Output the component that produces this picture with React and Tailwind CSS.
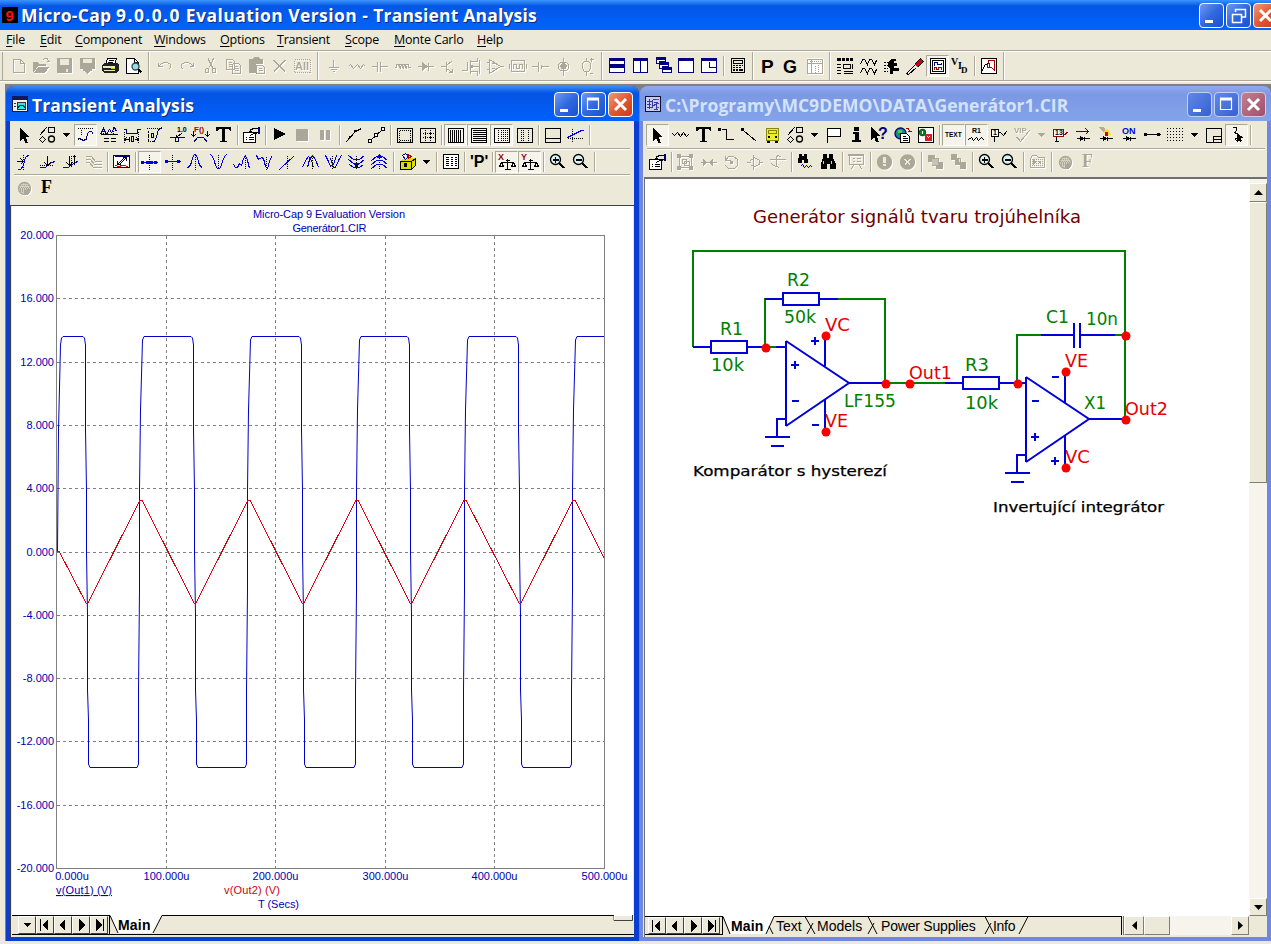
import React from 'react';

const NAVY = '#000080';
const BLUE = '#0000e0';
const RED = '#a00000';

const waveUp = 'M3 15L5 14L7 10L8 5L10 2H11L13 5L14 10L16 14L18 15';
const waveDown = 'M3 2L5 4L7 9L8 13L10 16H12L14 13L15 9L17 4L19 2';

// Glyphs live on a 23x20 grid: s = stroked path, f = filled path, t = text
const GLYPHS = {
  new: [['s', 'M6 3H13L17 7V16H6ZM13 3V7H17']],
  open: [['f', 'M3 6h5l1 2h7v2H8l-4 6H3z'], ['f', 'M8 11h11l-4 6H4z'], ['s', 'M12 4L14 2H17L18 5M16 5H19']],
  save: [['f', 'M4 2h15v15H4z'], ['f', 'M7 3h9v6H7z', '#ece9d8'], ['f', 'M13 13h2v3h-2z', '#ece9d8']],
  save2: [['f', 'M4 2h15v11H4z'], ['f', 'M7 3h9v4H7z', '#ece9d8'], ['f', 'M7 13h9v2H7zM8 15h7l-3.500 3z']],
  print: [
    ['f', 'M8 3h9l-2 5H6z', '#fff'], ['s', 'M8 2H17L15 8H6ZM9 4H14M8 6H13'],
    ['f', 'M3 9l3-2h12l2 2v5l-3 3H5l-2-2z', '#222'],
    ['f', 'M4 10h12v2H4zM5 14h11v1H5z', '#e8e8b8'], ['f', 'M12 12h4v1h-4z', '#cc0'],
  ],
  preview: [
    ['f', 'M4 2h9l4 4v12H4z', '#fff'], ['s', 'M4 2H12L16 6V17H4ZM12 2V6H16'],
    ['c', 13, 10, 3.5, '#9dd', '#345'], ['s', 'M16 13L19 17M17 13L20 16'],
  ],
  undo: [['s', 'M5 6V10H9M5 10L8 7L11 6H14L17 8V11L15 13']],
  redo: [['s', 'M17 6V10H13M17 10L14 7L11 6H8L5 8V11L7 13']],
  cut: [['s', 'M9 2L13 11M14 2L10 11M9 3L13 12M7 12h2v4H6v-3zM14 12h2v4h-3v-4z']],
  copy: [['s', 'M4 3H10L12 5V13H4ZM6 6H9M6 8H9M6 10H9M10 7H16L18 9V17H10V7M12 10H15M12 12H16M12 14H16']],
  paste: [['f', 'M4 3h4l1-2h5l1 2h3v5h-7v9H4z'], ['s', 'M11 9H17L19 11V17H11ZM13 12H16M13 14H17']],
  del: [['s', 'M5 4L17 16M6 4L17 15M17 4L5 16M16 4L5 15']],
  all: [['t', 'All', 4, 14, 11, null, 'b'], ['d', 'M3 3H19V16H3Z']],
  ground: [['s', 'M11 3V11M6 11H16M8 13H14M10 15H12']],
  res: [['s', 'M3 10L5 8L8 12L12 8L15 12L18 8L20 10']],
  cap: [['s', 'M3 10H9V5M9 10V15M12 5V15M12 10H19']],
  ind: [['s', 'M3 11H5V8H7L9 12L8 8H10L12 12L11 8H13L15 12L14 8H17V11H19']],
  diode: [['s', 'M3 10H19M14 6V14'], ['f', 'M8 6l6 4.500l-6 4.500z']],
  npn: [['s', 'M3 10H9M9 5V15M9 9L15 4M9 12L15 16M15 12V16H11']],
  mos: [['s', 'M1 14H7V5M10 3V17M10 5H17V1M10 10H18M10 15H17V19M13 8L10 10L13 12M19 3V17']],
  opamp: [['s', 'M6 3V17L17 10ZM3 6H6M3 13H6M17 10H20M8 7H11M8 12H11']],
  pulse: [['s', 'M5 4H18V15H5ZM3 7V12M20 7V12M7 12V8H10V12H13V8H16V12']],
  batt: [['s', 'M2 10H8M9 5V15M12 8V12M12 10H19']],
  isrc: [['s', 'M11 1V19M8 6H14L16 8V12L14 14H8L6 12V8Z'], ['f', 'M8 10l3-4l4 4v1H8zM9 11h5v2H9z']],
  vsrc: [['s', 'M11 1V5M11 15V19M9 5H13L15 7V12L13 15H9L7 12V7ZM14 3H18M16 1V5M14 17H17']],
  tileH: [['f', 'M3 2h16v15H3z', NAVY], ['f', 'M4 5h14v3H4zM4 12h14v4H4z', '#fff']],
  tileV: [['f', 'M4 2h15v15H4z', NAVY], ['f', 'M5 5h6v11H5zM12 5h6v11h-6z', '#fff']],
  cascade: [['f', 'M4 1h10v7H4zM7 6h10v7H7zM10 11h10v6H10z', NAVY], ['f', 'M5 4h8v1H5zM5 5h2v2H5zM8 9h8v1H8zM8 10h2v2H8zM11 14h8v2h-8z', '#fff']],
  maxi: [['f', 'M3 2h16v15H3z', NAVY], ['f', 'M4 5h14v11H4z', '#fff']],
  half: [['f', 'M3 2h16v15H3z', NAVY], ['f', 'M4 5h14v11H4z', '#fff'], ['s', 'M11 5V11H18', NAVY]],
  calc: [['s', 'M5 2H18V16H5ZM7 4H16V7H7Z'], ['f', 'M7 9h2v1H7zM10 9h2v1h-2zM13 9h2v1h-2zM16 9h1v1h-1zM7 11h2v1H7zM10 11h2v1h-2zM13 11h2v1h-2zM7 13h2v2H7zM10 13h2v2h-2zM13 13h4v2h-4z']],
  P: [['t', 'P', 4, 17, 19, '#000', 'b']],
  G: [['t', 'G', 3, 17, 18, '#000', 'b']],
  tabl: [['f', 'M4 2h16v16H4z', '#fff'], ['s', 'M4 3H19V17H4ZM4 7H19M8 3V17'], ['d', 'M6 5H18M12 9V16M15 8V16']],
  list: [['f', 'M3 2h4v3H3zM8 2h3v3H8zM12 2h3v3h-3zM16 2h3v3h-3zM3 8h4v1H3zM3 11h4v1H3zM3 14h4v1H3zM3 17h4v1H3z'], ['s', 'M9 8H16V12H9ZM18 7V12M9 15H18M9 17H18']],
  waves: [['s', 'M3 8L5 3H7L10 8L12 3H14L17 8L19 4M3 17L5 12H7L10 17L12 12H14L17 17L19 13']],
  wrench: [['f', 'M12 3h4v2h-2v2h3v3h-3v2h5v3h-6v3h-3v-5l-2-2V6z'], ['f', 'M4 6h2v1H4zM7 6h1v1H7zM4 9h2v1H4zM7 9h1v1H7zM4 12h2v1H4zM7 12h1v1H7zM4 15h2v1H4zM7 15h1v1H7z']],
  probe: [['f', 'M11 8l6-6l3 3l-6 6z', '#d00010'], ['s', 'M11 8L17 2L20 5L14 11M11 9L3 17M13 11L5 18M3 17L5 18']],
  scope: [['f', 'M4 3h15v15H4z', '#fff'], ['s', 'M4 2H19V17H4ZM6 4H17V15H6Z'], ['s', 'M8 9V6H11V8H15V6', NAVY], ['s', 'M8 13V11H10V13H12V11H15V13', RED]],
  vid: [['t', 'V', 2, 9, 10, '#000', 's'], ['t', 'I', 9, 13, 10, '#000', 's'], ['t', 'D', 12, 17, 9, '#000', 's']],
  plotbox: [['f', 'M4 2h15v15H4z', '#fff'], ['s', 'M4 2H19V17H4ZM4 15L8 8L11 7'], ['s', 'M11 4H17V14L14 11H10ZM12 6V11', RED]],

  arrow: [['f', 'M7 2v14l3-3l2.500 5h2.500l-2.500-6h4z']],
  shapes: [['s', 'M3 10L10 2M12 2H18V7H12ZM6 11L9 14L6 17L3 14Z'], ['c', 15, 13.5, 3, 'none', '#000']],
  drop: [['f', 'M3 8h8l-4 4z']],
  cursorWave: [['d', 'M3 3H19M3 14H12M7 4V9'], ['s', 'M3 13H6L8 15H10L12 13L13 8L15 6H17L19 9', NAVY]],
  peaks: [['s', 'M3 9L6 3L9 9L12 4L14 7L17 2L19 6', NAVY], ['s', 'M3 9H20M6 13H11M13 13H18M6 16H11M13 16H18'], ['d', 'M6 1V9M16 1V9']],
  width: [['s', 'M3 4H6V8H17V4H20', NAVY], ['s', 'M4 14H8M14 14H18M6 12L4 14L6 16M16 12L18 14L16 16M9 11V16M11 11H13V16H11Z'], ['d', 'M4 6V17M18 6V17']],
  height: [['s', 'M9 16H11L13 11L15 4L19 2', NAVY], ['d', 'M3 3H17M4 16H11'], ['s', 'M5 5V7M5 13V15M5 8V12M8 8H10V12H8Z']],
  tag: [['s', 'M3 12H9V16H12V12H18', NAVY], ['s', 'M16 7L10 12M10 9V12H13'], ['t', '1.0', 11, 7, 7, '#000', 'b']],
  func: [['t', 'F()', 5, 7, 8, RED, 'b'], ['s', 'M4 5V11M18 5V11M2 9L4 11L6 9M16 9L18 11L20 9'], ['s', 'M4 17L8 12H14L18 17', NAVY]],
  T: [['f', 'M4 2h15v4h-1l-2-2h-3v12h2v1H8v-1h2V4H7L5 6H4z']],
  props: [['f', 'M3 7h13v11H3z', '#fff'], ['s', 'M3 7H15V17H3ZM5 12H6M8 12H13M5 14H6M8 14H13M10 10L13 8L11 6M9 8L10 4L14 3H18V7L14 8'], ['f', 'M18 2h2v7h-2z', NAVY]],
  play: [['f', 'M6 3l12 6l-12 6z']],
  stop: [['f', 'M5 4h12v12H5z']],
  pause: [['f', 'M6 5h4v10H6zM12 5h4v10h-4z']],
  line1: [['s', 'M3 17L13 6L19 3'], ['f', 'M7 11h2v2H7zM12 5h2v2h-2z']],
  line2: [['s', 'M4 16L18 3'], ['f', 'M3 14h4v4H3zM9 8h4v4H9zM16 2h4v4h-4z'], ['f', 'M4 15h2v2H4zM10 9h2v2h-2zM17 3h2v2h-2z', '#fff']],
  box1: [['s', 'M4 3H19V17H4Z'], ['d', 'M6 5H18M6 15H18M6 5V16M17 5V16']],
  box2: [['s', 'M4 3H19V17H4Z'], ['d', 'M6 8H18M6 12H18M9 4V16M14 4V16M8 8H10M8 12H10M13 8H15M13 12H15']],
  vlines: [['s', 'M4 3H19V17H4ZM6 4V16M8 4V16M10 4V16M12 4V16M14 4V16M16 4V16']],
  hlines: [['s', 'M4 3H19V17H4ZM5 5H18M5 7H18M5 9H18M5 11H18M5 13H18M5 15H18']],
  dots1: [['s', 'M4 3H19V17H4Z'], ['d', 'M8 4V16M11 4V16M13 4V16M15 4V16M17 4V16']],
  dots2: [['s', 'M4 3H19V17H4Z'], ['d', 'M8 4V16M10 4V16M15 4V16']],
  base: [['s', 'M4 3H19V17H4ZM4 13H19']],
  cross: [['d', 'M3 13H19M8 3V17'], ['s', 'M3 12L17 5H19', BLUE]],
  c1: [['s', 'M4 17H7L10 13L12 5L16 2', BLUE], ['s', 'M3 9H10M7 6L10 9L7 12'], ['d', 'M10 2V17']],
  c2: [['s', 'M3 15H9L15 10L19 9', BLUE], ['s', 'M11 3V13M8 10L11 13L14 10'], ['d', 'M3 13H16']],
  c3: [['s', 'M3 15H9L15 10L19 9', BLUE], ['s', 'M10 3V13M7 10L10 13L13 10M15 12V3M13 5L15 3L17 5'], ['d', 'M12 3V15']],
  c4: [['s', 'M3 4H9L13 9H19M3 7H8L12 12H19M3 10H7L11 15H19']],
  redplot: [['f', 'M3 3h16v13H3z', '#fff'], ['s', 'M3 3H19V15H3ZM4 4H18', NAVY], ['s', 'M5 13L8 14L12 13L18 14', '#d00'], ['s', 'M7 12L14 5M9 12L16 5M12 5H16V8M7 8V12H10']],
  h1: [['s', 'M3 10H19', BLUE], ['f', 'M3 9h3v3H3zM8 9h3v3H8zM12 9h3v3h-3zM16 9h3v3h-3z', BLUE], ['d', 'M11 2V18']],
  h2: [['s', 'M3 9H19', BLUE], ['f', 'M4 8h3v3H4zM16 8h3v3h-3z', BLUE], ['d', 'M11 2V18']],
  p1: [['s', waveUp, BLUE], ['d', 'M11 2V17']],
  p2: [['s', waveDown, BLUE], ['d', 'M11 2V16']],
  p3: [['s', 'M3 12L5 15H7L9 11L11 13L13 6L15 3L17 8L19 16', BLUE], ['d', 'M15 3V16']],
  p4: [['s', 'M3 3L5 7L8 5L10 6L12 14L14 16L16 9L18 4', BLUE], ['d', 'M13 4V17']],
  p5: [['s', 'M3 17L18 3', BLUE], ['d', 'M11 3V17']],
  p6: [['s', 'M3 15L6 8L9 4L12 8L14 15M8 15L10 7L13 3L16 7L19 15', BLUE], ['d', 'M13 3V17']],
  p7: [['s', 'M3 3L6 9L8 14L11 12L14 3M8 6L11 15H13L16 8L19 3', BLUE], ['d', 'M10 3V17']],
  p8: [['s', 'M3 3L8 7H14L19 3M3 7L8 11H14L19 7M4 12L8 15H14L18 12', BLUE], ['f', 'M9 12h5l-2 4h-1z', BLUE], ['d', 'M11 3V17']],
  p9: [['s', 'M3 8L8 4H14L19 8M3 12L8 8H14L19 12M3 16L8 12H14L19 16', BLUE], ['f', 'M9 6h5l-2-4h-1z', BLUE], ['d', 'M11 3V17']],
  cube: [['f', 'M4 9l4-3h11v8l-4 3H4z', '#dddd00'], ['s', 'M4 9H15V17H4ZM15 9L19 6V13L15 17'], ['f', 'M6 3h4v4H6z', '#fff'], ['s', 'M6 3L9 1L12 4L9 7Z', NAVY], ['s', 'M11 2L15 4L12 6Z', RED], ['f', 'M8 11h3v4H8z']],
  sheet: [['f', 'M4 2h15v15H4z', '#fff'], ['s', 'M4 2H19V16H4ZM6 5H9M6 7H9M6 9H9M6 11H9M6 13H9M11 5H13M11 7H13M11 9H13M11 11H13M11 13H13M15 5H17M15 7H17M15 9H17M15 11H17M15 13H17']],
  qp: [['t', "'P'", 3, 15, 16, '#000', 'b']],
  sx: [['t', 'X', 3, 8, 9, RED, 'b'], ['s', 'M12 6V17M6 10H18M9 17H15M6 10L4 14H8L6 10M18 10L16 14H20L18 10M10 8H14']],
  sy: [['t', 'Y', 3, 8, 9, RED, 'b'], ['s', 'M12 6V17M6 10H18M9 17H15M6 10L4 14H8L6 10M18 10L16 14H20L18 10M10 8H14']],
  zin: [['c', 9, 7, 5, '#d8f4f4', '#000'], ['s', 'M6 7H12M9 4V10M6 8H12M13 11L18 16M12 11L17 16M14 11L19 16']],
  zout: [['c', 9, 7, 5, '#d8f4f4', '#000'], ['s', 'M6 7H12M6 8H12M13 11L18 16M12 11L17 16M14 11L19 16']],
  ball: [['c', 11, 10, 6, '#d4d0c0', '#aca899'], ['d', 'M6 7H16M5 9H17M6 11H17M6 13H16M8 5H14M8 15H14M6 10H17M6 12H16'], ['f', 'M13 11h4v3l-3 3h-3v-3z']],
  F: [['t', 'F', 5, 15, 18, null, 's']],

  zig: [['s', 'M3 8L5 10L8 7L11 11L14 7L17 11L19 9']],
  wire: [['f', 'M3 3h3v3H3z'], ['s', 'M6 4H11V14H18']],
  diag: [['f', 'M3 3h3v3H3z'], ['s', 'M5 5L18 16']],
  bus: [['f', 'M5 3h12v13H5z', '#eded30'], ['s', 'M5 3H17V15H5ZM7 5H15V8H7Z', '#88880a'], ['f', 'M6 16h3v2H6zM14 16h3v2h-3zM7 11h2v2H7zM14 11h2v2h-2z']],
  flag: [['f', 'M5 3h14v8H5z', '#fff'], ['s', 'M5 3H18V11H5ZM5 3V17']],
  info: [['f', 'M9 2h5v4H9zM8 7h6v8h2v2H7v-2h3V9H8z']],
  help: [['f', 'M3 2v13l3-3l2 5h3l-2-6h3z'], ['t', '?', 10, 14, 16, NAVY, 'b']],
  globe: [['c', 9, 8, 5.5, '#168c88', NAVY], ['f', 'M7 5h4v3H7z', '#48d050'], ['f', 'M9 8h9v10H9z', '#fff'], ['s', 'M9 8H15L18 11V17H9ZM11 11H14M11 13H16M11 15H16'], ['s', 'M14 3L17 3L18 6M16 6H20', RED]],
  rg: [['f', 'M4 3h15v15H4z', '#fff'], ['s', 'M4 2H19V17H4Z'], ['c', 8, 7, 3, '#109020', '#086010'], ['f', 'M11 9h7v7h-7z', '#d02020'], ['s', 'M13 11L15 13M15 11L13 13', '#fff'], ['s', 'M8 5V8', '#fff']],
  TEXT: [['t', 'TEXT', 3, 12, 6.5, '#000', 'b']],
  R1: [['t', 'R1', 7, 8, 7, '#000', 'b'], ['s', 'M3 14L6 12L8 15L11 12L13 15L16 12L19 15']],
  n1: [['f', 'M3 4h8v8H3z', '#fff'], ['s', 'M3 4H10V11H3ZM6 11V16M10 7H12L15 10L18 6'], ['t', '1', 5, 10, 7, '#000', 'b']],
  vip: [['t', 'VIP', 3, 8, 8, null, 'b'], ['s', 'M5 12L9 16L18 5M6 12L9 15']],
  n13: [['f', 'M4 4h11v8H4z', '#fff'], ['s', 'M4 4H14V11H4ZM14 10L19 6', RED], ['s', 'M7 11V16M5 16H9'], ['t', '13', 6, 10, 7, '#000', 'b']],
  cur: [['s', 'M3 6H16M13 3L16 6L13 9', BLUE], ['s', 'M4 13H17M8 11V15L11 13ZM12 11V15']],
  pow: [['f', 'M4 2h5l3 5H8z', '#b5ad8c'], ['f', 'M9 6l3-2l3 3l1 3h-6z', '#ffe030'], ['f', 'M10 7h3v4h-3z', '#e00000'], ['s', 'M4 13H17M8 11V15L11 13ZM12 11V15']],
  ON: [['t', 'ON', 4, 9, 9, BLUE, 'b'], ['s', 'M4 13H17M8 11V15L11 13ZM12 11V15']],
  pin: [['s', 'M4 9H19'], ['f', 'M3 8h3v3H3zM16 8h3v3h-3z']],
  grid: [['p', 'M3 3H20M3 6H20M3 9H20M3 12H20M3 15H20']],
  title: [['s', 'M4 3H19V17H4ZM11 17V11H19M11 14H19']],
  rub: [['s', 'M7 2H11V5L9 7L13 9V12L10 13L11 16'], ['f', 'M12 8v9l2-2l1 2l2-1l-1-3h3z']],
  grp: [['s', 'M5 4H17V15H5ZM8 7H12V11H8ZM10 9H15V13H10Z'], ['f', 'M3 2h4v4H3zM15 2h4v4h-4zM3 14h4v4H3zM15 14h4v4h-4z']],
  flipx: [['s', 'M3 10H19'], ['f', 'M6 6l4 4.500l-4 4.500zM16 6l-4 4.500l4 4.500z']],
  rot: [['s', 'M5 3V8H10M5 8L8 4H13L17 7V13L14 16H8L5 13'], ['f', 'M10 9h3v3h-3z']],
  fx: [['s', 'M3 10H7M15 10H19M7 8L10 6M10 2V17M7 13H10M11 5L16 8V12L11 14']],
  fy: [['s', 'M3 7H19M5 11L7 13L10 14V4L12 3L15 5M10 14L13 15']],
  find: [['f', 'M5 2h3v2h2V2h3v3l1 3v3h-4V8H8v3H4V8l1-3z'], ['s', 'M6 14L8 12L10 15L12 13L14 15L16 13L18 15', BLUE]],
  bino: [['f', 'M6 2h4v4h2V2h4v4l3 6v5h-6v-5h-3v5H4v-5l2-6z'], ['f', 'M6 9h1v3H6zM14 9h1v3h-1z', '#ccc']],
  board: [['f', 'M3 2h16v2H3z'], ['s', 'M4 3V12H18V3M8 12L6 17M14 12L16 17M7 6H9M11 6H15M7 9H9M11 9H15']],
  excl: [['c', 11, 9.5, 7, '#aca899', '#aca899'], ['f', 'M10 5h3v6h-3zM10 12h3v2h-3z', '#ece9d8']],
  xx: [['c', 11, 9.5, 7, '#aca899', '#aca899'], ['s', 'M8 7L14 13M9 7L14 12M14 7L8 13M13 7L8 12', '#ece9d8']],
  front: [['f', 'M4 3h7v3h4v4h4v7h-7v-3H8v-4H4z'], ['f', 'M8 7h6v6H8z', '#c8c4b4']],
  back: [['f', 'M4 2h6v4h4v4h5v7h-6v-4H8V8H4z'], ['f', 'M12 7h1v3h-1z', '#ece9d8']],
  folder: [['s', 'M4 6L6 3H10L12 5H18V15H4Z'], ['d', 'M5 7H18M5 9H18M5 11H18M5 13H18'], ['f', 'M7 7l4 3l-4 3zM13 9h2v2h-2z']],
};

const FACE = {
  b: "font-bold font-['Liberation_Sans',sans-serif]",
  s: "font-bold font-['Liberation_Serif',serif]",
};

function Glyph({ name, w = 23 }) {
  return (
    <svg width={w} height={20} viewBox={`0 0 ${w} 20`} className="block shrink-0 overflow-visible" shapeRendering="crispEdges">
      {GLYPHS[name].map((g, i) => {
        const [k, a, b, c, d, e, f] = g;
        if (k === 's') return <path key={i} d={a} fill="none" stroke={b || 'currentColor'} transform="translate(.5 .5)" />;
        if (k === 'd') return <path key={i} d={a} fill="none" stroke="currentColor" strokeDasharray="1 1" transform="translate(.5 .5)" />;
        if (k === 'p') return <path key={i} d={a} fill="none" stroke="currentColor" strokeDasharray="1 2" transform="translate(0 .5)" />;
        if (k === 'f') return <path key={i} d={a} fill={b || 'currentColor'} />;
        if (k === 'c') return <circle key={i} cx={a + 0.5} cy={b + 0.5} r={c} fill={d} stroke={e} shapeRendering="auto" strokeWidth="1.3" />;
        return <text key={i} x={b} y={c} fontSize={d} fill={e || 'currentColor'} className={FACE[f]}>{a}</text>;
      })}
    </svg>
  );
}

// Item syntax: "name" plain, "-name" disabled, "+name" pressed, "|" small gap rule, "‖" band rule, "v"/"-v" drop arrow
function Tools({ items }) {
  return items.split(' ').map((it, i) => {
    if (it === '|') return <div key={i} className="flex h-[20px] w-[5px] justify-center"><i className="w-px bg-[#aca899]" /><i className="w-px bg-white" /></div>;
    if (it === '‖') return <div key={i} className="flex h-[28px] w-[8px] justify-center"><i className="w-px bg-[#aca899]" /><i className="w-px bg-white" /></div>;
    const off = it[0] === '-';
    const on = it[0] === '+';
    const name = off || on ? it.slice(1) : it;
    if (name === 'v') return <div key={i} className={off ? 'w-[15px] text-[#aca899]' : 'w-[15px]'}><Glyph name="drop" w={15} /></div>;
    return (
      <div
        key={i}
        className={
          off ? 'flex h-[24px] w-[23px] items-center text-[#aca899] [filter:drop-shadow(1px_1px_0_#fff)]'
            : on ? 'flex h-[22px] w-[23px] items-center border border-t-[#aca899] border-l-[#aca899] border-r-white border-b-white bg-[#f5f3ea] *:-ml-px'
              : 'flex h-[24px] w-[23px] items-center'
        }
      >
        <Glyph name={name} />
      </div>
    );
  });
}

function CapButton({ kind, close, dim }) {
  const tone = close
    ? dim ? 'bg-linear-to-br from-[#c08090] to-[#a05068] border-[#d8c8e0]' : 'bg-linear-to-br from-[#f09878] via-[#e05830] to-[#c83c10] border-white'
    : dim ? 'bg-linear-to-br from-[#6088e8] to-[#3860d0] border-[#c0d0f4]' : 'bg-linear-to-br from-[#7098f0] via-[#3068e0] to-[#1850d0] border-white';
  return (
    <div className={`flex h-[25px] w-[25px] shrink-0 items-center justify-center rounded-[4px] border ${tone}`}>
      <svg width="23" height="23" viewBox="0 0 23 23" fill="none" stroke="#fff">
        {kind === 'min' && <path d="M5 17.500H13" strokeWidth="3" />}
        {kind === 'max' && <path d="M5.500 5V16.500H16.500V5" strokeWidth="1.200" />}
        {kind === 'max' && <path d="M5 6H17" strokeWidth="3" />}
        {kind === 'restore' && <path d="M8.500 8V5.500H18.500V13H15M5 10.500H14.500V18.500H5.500V10M8 5.500H19M5 10.500H15" strokeWidth="1.500" />}
        {kind === 'x' && <path d="M6 6L17 17M17 6L6 17" strokeWidth="3" />}
      </svg>
    </div>
  );
}

const MENU = [
  ['File', 'w-[34px]'], ['Edit', 'w-[35px]'], ['Component', 'w-[79px]'], ['Windows', 'w-[66px]'], ['Options', 'w-[57px]'],
  ['Transient', 'w-[68px]'], ['Scope', 'w-[49px]'], ['Monte Carlo', 'w-[83px]'], ['Help', 'w-[40px]'],
];

const TITLE_FONT = "font-['Open_Sans',sans-serif] font-bold whitespace-nowrap";

function TabButton({ d, extra }) {
  return (
    <div className="flex h-full w-[18px] shrink-0 items-center justify-center border border-t-white border-l-white border-r-[#404040] border-b-[#404040] bg-[#ece9d8]">
      <svg width="14" height="14" viewBox="0 0 14 14" shapeRendering="crispEdges">
        <path d={d} />
        {extra && <path d={extra} fill="none" stroke="#000" />}
      </svg>
    </div>
  );
}

function TabNav() {
  return (
    <>
      <TabButton d="M10 1v12L4 7z" extra="M2.500 1V13" />
      <TabButton d="M9 1v12L3 7z" />
      <TabButton d="M5 1v12l6-6z" />
      <TabButton d="M4 1v12l6-6z" extra="M11.500 1V13" />
    </>
  );
}

const falls = [87, 195, 303, 411, 520];
const rises = [140, 248, 357, 465, 573];
const wave =
  'M57.500 551L58.500 430L60.500 345L61.500 338L63 336.500' +
  falls.map((x, i) => {
    const r = rises[i];
    const end = i < 4 ? `L${r + 4} 336.500` : 'L577 336.500H604';
    return `L${x - 4} 336.500L${x - 2.5} 338L${x - 1.5} 345V430L${x - 0.5} 490V552L${x + 0.5} 615V690L${x + 1.5} 720V764L${x + 3} 767.500H${r - 3}L${r - 1.5} 764V690L${r - 0.5} 590V490L${r + 0.5} 410L${r + 2.5} 340${end}`;
  }).join('');

function Chart() {
  const y = [235.5, 298.5, 362.5, 425.5, 488.5, 552.5, 615.5, 678.5, 741.5, 805.5, 868.5];
  const x = [56.5, 166.5, 275.5, 385.5, 494.5, 604.5];
  return (
    <svg width="621" height="709" viewBox="12 206 621 709" className="block bg-white font-['Liberation_Sans',sans-serif] text-[11px]" fill="#0000b0">
      <g shapeRendering="crispEdges" fill="none" stroke="#808080">
        {y.slice(1, 10).map((v) => <path key={v} d={`M57 ${v}H604`} strokeDasharray="3 3" />)}
        {x.slice(1, 5).map((v) => <path key={v} d={`M${v} 236V868`} strokeDasharray="3 3" />)}
        <path d="M56.500 235.500H604.500V868.500H56.500Z" />
      </g>
      <path d={wave} fill="none" stroke="#0000c8" />
      <path d="M57 551H59L86 603H88L140 500H142L194 603H196L248 500H250L302 603H304L356 500H358L410 603H412L464 500H466L519 603H521L573 500H575L604 558" fill="none" stroke="#d80010" shapeRendering="crispEdges" />
      {y.map((v, i) => <text key={v} x="54" y={v + 3.5} textAnchor="end">{(20 - i * 4).toFixed(3)}</text>)}
      {x.map((v, i) => <text key={v} x={i ? v : 72} y="880" textAnchor="middle">{`${(i * 100) || 0}.000u`}</text>)}
      <text x="329" y="218" textAnchor="middle" textLength="152">Micro-Cap 9 Evaluation Version</text>
      <text x="329.500" y="232" textAnchor="middle" textLength="74">Generátor1.CIR</text>
      <text x="56" y="894" className="underline" textLength="56">v(Out1) (V)</text>
      <text x="224" y="894" fill="#d00010" textLength="56">v(Out2) (V)</text>
      <text x="258" y="908" textLength="41">T (Secs)</text>
    </svg>
  );
}

function Label({ x, y, w, children, ...rest }) {
  return <text x={x} y={y} textLength={w} lengthAdjust="spacingAndGlyphs" {...rest}>{children}</text>;
}

function Schematic() {
  const nodes = [[766, 348], [826, 336], [826, 432], [886, 384], [910, 384], [1018, 384], [1126, 336], [1066, 372], [1126, 420], [1066, 468]];
  const green = [[787, 286, 'R2', 23], [784, 323, '50k', 32], [720, 335, 'R1', 23], [711, 371, '10k', 33], [844, 407, 'LF155', 52], [965, 371, 'R3', 24], [965, 409, '10k', 33], [1046, 323, 'C1', 23], [1086, 325, '10n', 32], [1084, 409, 'X1', 22]];
  const red = [[825, 331, 'VC', 25], [825, 427, 'VE', 23], [909, 379, 'Out1', 43], [1065, 367, 'VE', 23], [1125, 415, 'Out2', 43], [1065, 463, 'VC', 25]];
  return (
    <svg width="603" height="737" viewBox="645 179 603 737" className="block bg-white font-['DejaVu_Sans',sans-serif] text-[17px]">
      <g fill="none" strokeWidth="2" shapeRendering="crispEdges">
        <path stroke="#008000" d="M693 347V251H1125V420M765 347V299H767M765 347H787M838 299H885V384M885 383H946M1017 383V335H1042M1114 335H1126" />
        <path stroke="#0000d8" d="M693 347H711M747 347H767M711 341H747V353H711ZM765 299H783M783 293H819V305H783ZM819 299H838M776 347H786M786 341V426M849 383H886M825 334V366M825 400V432M787 419H777V437M765 437H790M771 446H784" />
        <path stroke="#0000d8" d="M945 383H963M963 377H999V389H963ZM999 383H1026M1041 335H1074M1074 323V348M1080 323V348M1080 335H1115M1026 377V462M1089 419H1126M1065 370V403M1065 436V468M1026 455H1017V473M1005 473H1030M1011 482H1024" />
        <path stroke="#0000d8" d="M791 365H799M795 361V369M792 401H799M811 341H819M815 337V345M812 425H819M1052 377H1059M1032 401H1039M1031 437H1039M1035 433V441M1051 461H1059M1055 457V465" />
      </g>
      <path d="M786 341L849 383L786 426M1026 377L1089 419L1026 462" fill="none" stroke="#0000d8" strokeWidth="2" />
      <g fill="#008000">{green.map(([x, y, s, w]) => <Label key={`${x}-${y}`} x={x} y={y} w={w}>{s}</Label>)}</g>
      <g fill="#e80000">{red.map(([x, y, s, w]) => <Label key={`${x}-${y}`} x={x} y={y} w={w}>{s}</Label>)}</g>
      <g fill="#f80000">{nodes.map(([x, y]) => <circle key={`${x}-${y}`} cx={x} cy={y} r="4.500" />)}</g>
      <Label x={753} y={223} fill="#700000" w={328} className="text-[18px]">Generátor signálů tvaru trojúhelníka</Label>
      <Label x={693} y={476} w={194} className="text-[14px]" stroke="#000" strokeWidth=".25">Komparátor s hysterezí</Label>
      <Label x={993} y={512} w={171} className="text-[14px]" stroke="#000" strokeWidth=".25">Invertující integrátor</Label>
    </svg>
  );
}

const RULE = 'h-[2px] shrink-0 border-t border-[#aca899] bg-white';
const SCROLL_BTN = 'flex shrink-0 items-center justify-center border border-t-white border-l-white border-r-[#808070] border-b-[#808070] bg-[#ece9d8]';
const HATCH = 'bg-[#f6f4ec]';
const TAB_TEXT = "font-['Liberation_Sans',sans-serif] text-[14px] leading-[17px] whitespace-nowrap";

function TransientWindow() {
  return (
    <section className="flex h-[855px] w-[633px] shrink-0 flex-col rounded-t-[8px] bg-[#0a3ed0] pr-[5px] pb-[4px] pl-[4px]">
      <header className="-mr-[5px] -ml-[4px] flex h-[35px] shrink-0 items-center rounded-t-[8px] bg-linear-to-b from-[#3a8cf4] via-[#0454e4] via-20% to-[#0060fc] pt-px pr-[6px] pl-[6px]">
        <svg width="16" height="16" viewBox="0 0 16 16" shapeRendering="crispEdges">
          <path d="M0 0h16v16H0z" fill="#101860" /><path d="M1 4h14v11H1z" fill="#f4f0e0" /><path d="M5 6h9v8H5z" fill="#333" /><path d="M6 7h7v6H6z" fill="#38e0e0" /><path d="M6 12l2-3h3l2 3" fill="none" stroke="#004060" /><path d="M2 7h2v1H2zM2 10h2v1H2z" fill="#334" />
        </svg>
        <h2 className={`${TITLE_FONT} ml-[4px] w-[500px] pt-[2px] text-[17.500px] tracking-[0.100px] text-white [text-shadow:1px_1px_0_#0a2a80]`}>Transient Analysis</h2>
        <div className="ml-auto flex gap-[2px]"><CapButton kind="min" /><CapButton kind="max" /><CapButton kind="x" close /></div>
      </header>
      <div className="flex min-h-0 grow flex-col bg-[#ece9d8]">
        <div className="flex h-[27px] shrink-0 items-center pl-[3px]"><Tools items="arrow shapes v +cursorWave peaks width height tag func T | props | play -stop -pause | line1 line2 | box1 box2 | +vlines +hlines +dots1 dots2 | base cross |" /></div>
        <div className={`${RULE} mx-[4px]`} />
        <div className="flex h-[24px] shrink-0 items-center pl-[3px]"><Tools items="c1 c2 c3 -c4 | redplot | +h1 h2 p1 p2 p3 p4 p5 p6 p7 p8 p9 | cube v | sheet | qp | +sx +sy | zin zout |" /></div>
        <div className={`${RULE} mx-[4px]`} />
        <div className="flex h-[29px] shrink-0 items-center pb-[6px] pl-[3px]"><Tools items="-ball F" /></div>
        <div className="flex min-h-0 grow flex-col border-t border-l border-[#404040] pl-px">
          <Chart />
          <div className="flex h-[20px] border-b border-black bg-[#ece9d8]">
            <div className="flex h-[19px] w-[98px] border-t border-r border-black pl-[6px]">
              <TabButton d="M3 5h8l-4 4z" />
              <TabNav />
            </div>
            <div className="relative flex grow">
              <svg width="523" height="19" viewBox="0 0 523 19" className="absolute inset-0"><path d="M0 0H52L43 18H8Z" fill="#fff" /><path d="M0 .500L8 18M43 18L52 .500H504" fill="none" stroke="#000" /><path d="M504 0V5.500H522.500V0" fill="#ece9d8" stroke="#404040" /><path d="M504 0h18v1h-18zM504 0h1v5h-1z" fill="#fff" /></svg>
              <span className={`${TAB_TEXT} relative pt-[2px] pl-[8px] font-bold tracking-[0.200px]`}>Main</span>
            </div>
          </div>
        </div>
      </div>
    </section>
  );
}

const TABS = [['Main', 'w-[45px] font-bold tracking-[0.100px]'], ['Text', 'w-[41px]'], ['Models', 'w-[64px]'], ['Power Supplies', 'w-[112px] tracking-[-0.200px]'], ['Info', 'w-[40px] tracking-[-0.300px]']];

function CircuitWindow() {
  return (
    <section className="flex h-[855px] w-[631px] shrink-0 flex-col rounded-t-[8px] bg-[#7088e0] pr-[4px] pb-[4px] pl-[3px]">
      <header className="-mr-[4px] -ml-[3px] flex h-[35px] shrink-0 items-center rounded-t-[8px] bg-linear-to-b from-[#90a8f0] via-[#7c98e4] via-25% to-[#82a4ea] pt-px pr-[5px] pl-[5px]">
        <svg width="16" height="16" viewBox="0 0 16 16" shapeRendering="crispEdges">
          <path d="M.500.500h15v15H.500z" fill="#c8ccf0" stroke="#101030" /><path d="M2 5H7L9 3H12M4 3V13M7 5V11L11 8V13M2 11H8M9 6H13M2 8H6M9 13H13" fill="none" stroke="#3838a0" /><path d="M11 3H14M12 7H14M12 11H14" stroke="#d03030" />
        </svg>
        <h2 className={`${TITLE_FONT} ml-[4px] w-[500px] pt-[2px] text-[17.500px] tracking-[0.040px] text-[#d4e2fa]`}>C:\Programy\MC9DEMO\DATA\Generátor1.CIR</h2>
        <div className="ml-auto flex gap-[2px]"><CapButton kind="min" dim /><CapButton kind="max" dim /><CapButton kind="x" close dim /></div>
      </header>
      <div className="flex min-h-0 grow flex-col bg-[#ece9d8] pl-[2px]">
        <div className="flex h-[27px] shrink-0 items-center pl-px"><Tools items="+arrow zig T wire diag bus shapes v flag info help globe rg | +TEXT +R1 n1 -vip -v n13 cur pow ON pin grid v title +rub |" /></div>
        <div className={`${RULE} mx-[2px]`} />
        <div className="flex h-[24px] shrink-0 items-center pl-px"><Tools items="props | -grp -flipx -rot -fx -fy | find bino | -board | -excl -xx | -front -back | zin zout | -folder | -ball -F" /></div>
        <div className="h-[3px] shrink-0" />
        <div className="-ml-px flex min-h-0 grow flex-col border-t-2 border-l border-[#707070]">
          <div className="flex h-[737px] bg-white">
            <div className="w-[603px]"><Schematic /></div>
            <div className={`ml-px flex w-[18px] flex-col pt-[4px] ${HATCH}`}>
              <div className={`${SCROLL_BTN} h-[19px]`}><svg width="9" height="5"><path d="M0 5h9L4.500 0z" /></svg></div>
              <div className={`${SCROLL_BTN} h-[281px]`} />
              <div className={`${SCROLL_BTN} mt-auto h-[18px]`}><svg width="9" height="5"><path d="M0 0h9L4.500 5z" /></svg></div>
            </div>
          </div>
          <div className="flex h-[19px] bg-[#ece9d8]">
            <div className="flex h-[19px] w-[78px] border-t border-r border-b border-black pl-[3px]">
              <TabNav />
            </div>
            <div className="relative flex w-[401px]">
              <svg width="401" height="19" viewBox="0 0 401 19" className="absolute inset-0" fill="none" stroke="#000">
                <path d="M0 0H51L43 18H8Z" fill="#fff" stroke="none" />
                <path d="M0 .500L7 18M51 .500H398M51 .500L43 18M46 10L50 18M82 .500L92 18M90 7L84 18M145 .500L154 18M151 7L145 18M262 .500L271 18M268 7L262 18M305 .500L296 18M398.500 0V19M401 0V19" />
              </svg>
              <div className="relative flex pl-[8px]">
                {TABS.map(([t, c]) => <span key={t} className={`${TAB_TEXT} ${c} pt-[2px] text-[13.500px]`}>{t}</span>)}
              </div>
            </div>
            <div className={`flex w-[125px] ${HATCH}`}>
              <div className={`${SCROLL_BTN} w-[20px]`}><svg width="5" height="9"><path d="M5 0v9L0 4.500z" /></svg></div>
              <div className={`${SCROLL_BTN} w-[26px]`} />
              <div className={`${SCROLL_BTN} ml-auto w-[18px]`}><svg width="5" height="9"><path d="M0 0v9l5-4.500z" /></svg></div>
            </div>
          </div>
        </div>
      </div>
    </section>
  );
}

export default function App() {
  return (
    <div className="flex h-[944px] w-[1271px] flex-col overflow-hidden bg-[#ece9d8] text-black">
      <header className="flex h-[30px] shrink-0 items-center overflow-hidden bg-linear-to-b from-[#3a94fc] via-[#0456e4] via-20% to-[#0064ff] pl-[2px]">
        <svg width="16" height="16" viewBox="0 0 16 16" className="shrink-0"><path d="M0 0h16v16H0z" /><text x="3.500" y="13.500" fill="#ff1010" fontSize="15" className="font-['Liberation_Sans',sans-serif] font-bold">9</text></svg>
        <h1 className={`${TITLE_FONT} ml-[3px] w-[560px] text-[17.500px] text-white [text-shadow:1px_1px_0_#0a2a80]`}>
          <span className="tracking-[0.250px]">Micro-Cap </span>
          <span className="tracking-[1.400px]">9.0.0.0</span>
          <span className="tracking-[0.430px]"> Evaluation Version - </span>
          <span className="tracking-[0.180px]">Transient Analysis</span>
        </h1>
        <div className="ml-auto -mr-[7px] flex gap-[2px]"><CapButton kind="min" /><CapButton kind="restore" /><CapButton kind="x" close /></div>
      </header>
      <nav className="flex h-[20px] shrink-0 items-center pl-[6px] font-['Open_Sans',sans-serif] text-[12.500px] tracking-[-0.200px]">
        {MENU.map(([m, w]) => <span key={m} className={`${w} shrink-0 whitespace-nowrap`}><u className="underline-offset-2">{m[0]}</u>{m.slice(1)}</span>)}
      </nav>
      <div className={RULE} />
      <div className="ml-[2px] flex h-[28px] shrink-0 items-center border-l border-[#aca899] pl-[4px]">
        <Tools items="-new -open -save -save2 print preview ‖ -undo -redo -cut -copy -paste -del -all ‖ -ground -res -cap -ind -diode -npn -mos -opamp -pulse -batt -isrc -vsrc ‖ tileH tileV cascade maxi half | calc ‖ P G -tabl ‖ list waves wrench probe +scope vid | plotbox ‖" />
      </div>
      <div className={RULE} />
      <main className="flex min-h-0 grow flex-col pt-[2px] pl-[5px]">
        <div className="flex h-[857px] border-t border-l border-[#808080] bg-[#808080] pt-px">
          <TransientWindow />
          <div className="w-px shrink-0 bg-[#808080]" />
          <CircuitWindow />
        </div>
      </main>
    </div>
  );
}
